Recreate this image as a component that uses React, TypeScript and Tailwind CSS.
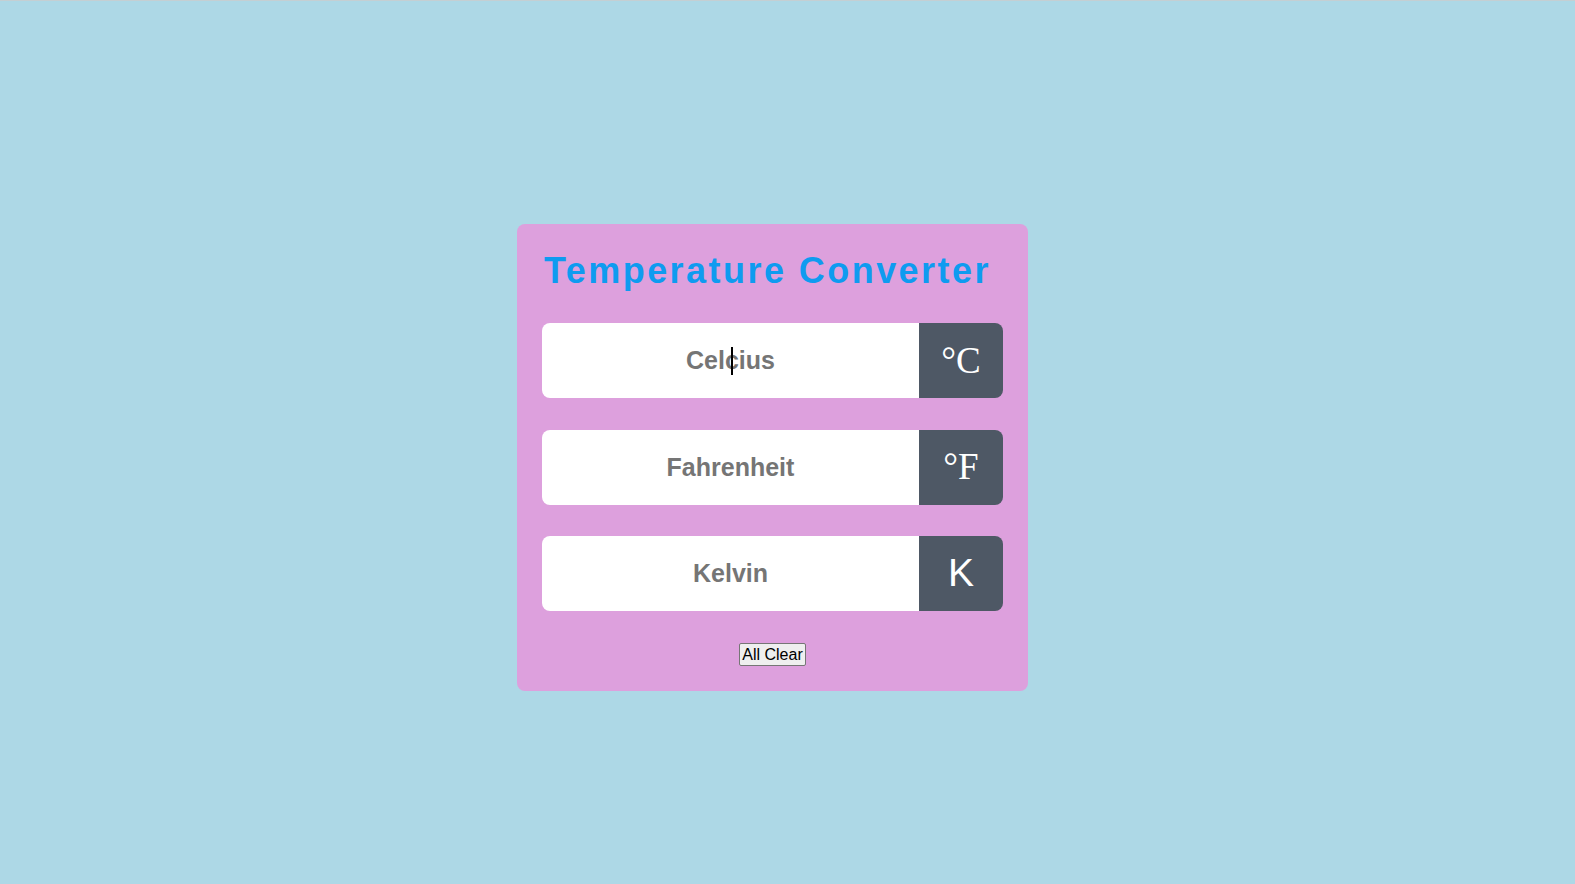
import React from 'react';

const units = [
  { name: 'Celcius', symbol: '°C', symbolClass: "text-[37px] font-['Liberation_Serif','Times_New_Roman',serif]", focused: true },
  { name: 'Fahrenheit', symbol: '°F', symbolClass: "text-[37px] font-['Liberation_Serif','Times_New_Roman',serif]", focused: false },
  { name: 'Kelvin', symbol: 'K', symbolClass: "text-[39px] font-['Liberation_Sans','Arial',sans-serif]", focused: false },
];

const App: React.FC = () => {
  return (
    <div className="min-h-screen w-full bg-[#add8e6] border-t border-[#c4cfd3] font-['Liberation_Sans',Arial,sans-serif]">
      <div className="w-[1545px] flex justify-center pt-[223px]">
        <div className="w-[511px] bg-[#dda0dd] rounded-[8px] px-[25px] pt-[26px] pb-[25px] flex flex-col">
          <h1 className="pl-[2px] text-[36px] leading-[42px] font-bold tracking-[2.45px] text-[#0e9bf0] text-left">
            Temperature Converter
          </h1>

          <div className="mt-[31px] flex flex-col gap-[31.5px]">
            {units.map((u) => (
              <div key={u.name} className="flex h-[75px]">
                <div className="relative flex-1">
                  <input
                    type="text"
                    placeholder={u.name}
                    className="w-full h-full bg-white rounded-l-[8px] outline-none text-center text-[25px] font-bold text-[#333] placeholder:text-[#757575] font-['Liberation_Sans',Arial,sans-serif]"
                  />
                  {u.focused && (
                    <span className="absolute left-[189px] top-[24px] w-[2px] h-[28px] bg-black" />
                  )}
                </div>
                <div className="w-[84px] bg-[#4e5865] rounded-r-[8px] flex items-center justify-center text-white">
                  <span className={u.symbolClass}>{u.symbol}</span>
                </div>
              </div>
            ))}
          </div>

          <div className="mt-[32px] flex justify-center">
            <button className="h-[23px] px-[2px] text-[16px] leading-[18px] text-black bg-[#efefef] border border-[#767676] rounded-[2px] font-['Liberation_Sans',Arial,sans-serif]">
              All Clear
            </button>
          </div>
        </div>
      </div>
    </div>
  );
};

export default App;
